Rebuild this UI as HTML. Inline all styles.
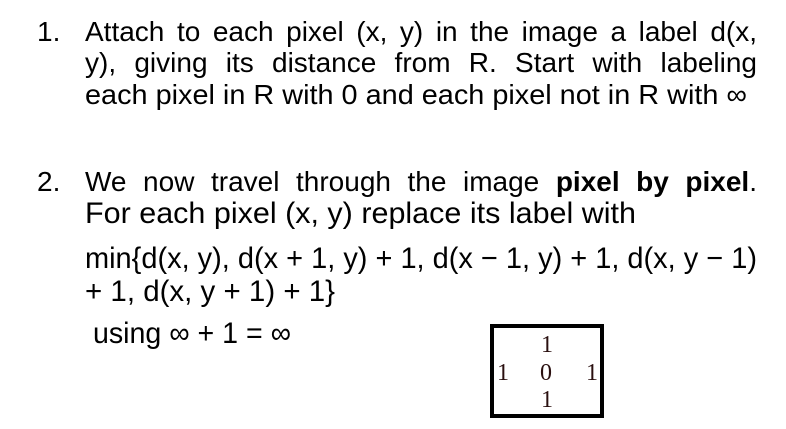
<!DOCTYPE html>
<html><head><meta charset="utf-8"><style>
body{margin:0;width:786px;height:429px;background:#fff;position:relative;overflow:hidden;font-family:"Liberation Sans",Arial,sans-serif;color:#000}
.l{position:absolute;font-size:28px;line-height:34px;white-space:nowrap}
.c{font-size:30px;top:-1px;position:relative}
.j{text-align:justify;text-align-last:justify;white-space:normal}
.s{transform-origin:0 0;display:inline-block}
.box{position:absolute;left:490px;top:324px;width:106px;height:86px;border:4px solid #000}
.d{position:absolute;font-family:"Liberation Serif",serif;font-size:24px;color:#2a1010;line-height:24px}
</style></head><body>
<div class="l" style="left:37px;top:15px">1.</div>
<div class="l j" style="left:85px;top:15px;width:672px">Attach to each pixel (x, y) in the image a label d(x,</div>
<div class="l j" style="left:85px;top:46px;width:672px">y), giving its distance from R. Start with labeling</div>
<div class="l" style="left:85px;top:78px"><span class="s" data-w="662">each pixel in R with 0 and each pixel not in R with ∞</span></div>
<div class="l" style="left:37px;top:165px">2.</div>
<div class="l j" style="left:85px;top:165px;width:672px">We now travel through the image <b>pixel by pixel</b>.</div>
<div class="l" style="left:85px;top:198px"><span class="s c" data-w="551">For each pixel (x, y) replace its label with</span></div>
<div class="l" style="left:85px;top:243px"><span class="s c" data-w="672">min{d(x, y), d(x + 1, y) + 1, d(x − 1, y) + 1, d(x, y − 1)</span></div>
<div class="l" style="left:85px;top:276px"><span class="s c" data-w="250">+ 1, d(x, y + 1) + 1}</span></div>
<div class="l" style="left:93px;top:318px"><span class="s c" data-w="198">using ∞ + 1 = ∞</span></div>
<div class="box"></div>
<div class="d" style="left:541px;top:333px">1</div>
<div class="d" style="left:497px;top:361px">1</div>
<div class="d" style="left:540px;top:361px">0</div>
<div class="d" style="left:586px;top:361px">1</div>
<div class="d" style="left:541px;top:388px">1</div>
<script>
document.querySelectorAll('.s').forEach(function(e){var w=+e.getAttribute('data-w');var r=e.getBoundingClientRect().width;if(r>0)e.style.transform='scaleX('+(w/r)+')';});
</script>
</body></html>
